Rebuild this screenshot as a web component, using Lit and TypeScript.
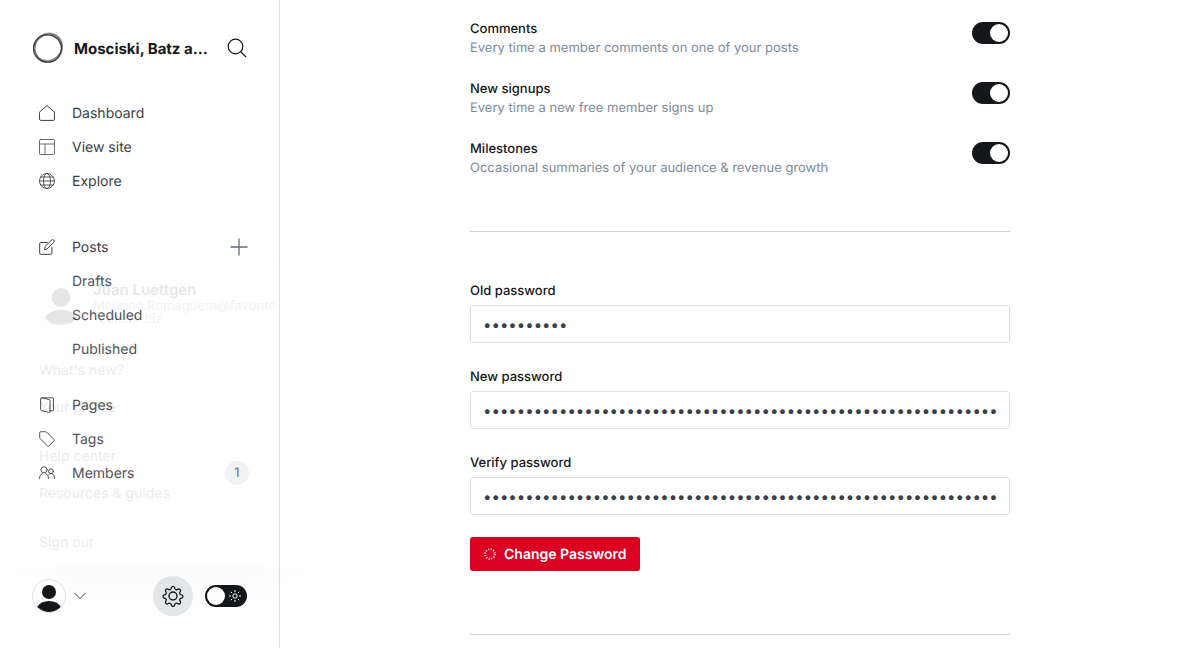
import { LitElement, html, svg, css, nothing } from "lit";
import { customElement, property, state } from "lit/decorators.js";

const icons: Record<string, unknown> = {
  home: svg`<path d="M.6 7 8 .6 15.400 7v7.400a1 1 0 0 1-1 1H1.600a1 1 0 0 1-1-1z"/>`,
  site: svg`<g stroke-opacity=".75"><rect x=".5" y=".5" width="15" height="15" rx="1"/><path d="M.5 5h15M6 5v10.500"/></g>`,
  globe: svg`<g stroke-opacity=".85"><circle cx="8" cy="8" r="7.500"/><ellipse cx="8" cy="8" rx="3.500" ry="7.500"/><path d="M.5 8h15M1.700 4h12.600M1.700 12h12.600"/></g>`,
  posts: svg`<path d="M8.300 3.500H1.700a1 1 0 0 0-1 1v9.800a1 1 0 0 0 1 1h10.200a1 1 0 0 0 1-1V8.300"/><path d="m5.700 10.300.6-3L12.500 1a1.450 1.450 0 0 1 2.200 0 1.450 1.450 0 0 1 0 2.200L8.500 9.600z"/>`,
  pages: svg`<path d="M11 13.700h2.500a.9.9 0 0 0 .9-.9V1.700a.9.9 0 0 0-.9-.9H2.400"/><path d="M1.600 1.700a.9.9 0 0 1 1.100-.9l7.500 1.700a1 1 0 0 1 .8 1v11a.9.9 0 0 1-1.100.9l-7.600-1.900a1 1 0 0 1-.7-.9z"/>`,
  tags: svg`<path d="M.7 1.700a1 1 0 0 1 1-1h4.900a1.500 1.500 0 0 1 1 .4l7.400 7.400a1 1 0 0 1 0 1.400l-5.100 5.100a1 1 0 0 1-1.400 0L1.100 7.600a1.500 1.500 0 0 1-.4-1z"/>`,
  members: svg`<circle cx="5" cy="4.800" r="3.100"/><path d="M.5 13.500c0-2.600 1.200-4.300 2.800-5M9.500 13.500c0-2.600-1.200-4.300-2.800-5"/><circle cx="12" cy="6.300" r="2.400"/><path d="M9.700 9.700l1-.9M13.300 8.700c1.300.6 2.200 2.300 2.200 4.800"/>`,
};

interface NavItem {
  label: string;
  icon?: string;
  add?: boolean;
  count?: number;
}

const navGroups: NavItem[][] = [
  [
    { label: "Dashboard", icon: "home" },
    { label: "View site", icon: "site" },
    { label: "Explore", icon: "globe" },
  ],
  [
    { label: "Posts", icon: "posts", add: true },
    { label: "Drafts" },
    { label: "Scheduled" },
    { label: "Published" },
  ],
  [
    { label: "Pages", icon: "pages" },
    { label: "Tags", icon: "tags" },
    { label: "Members", icon: "members", count: 1 },
  ],
];

const notifications = [
  { id: "comments", title: "Comments", text: "Every time a member comments on one of your posts" },
  { id: "signups", title: "New signups", text: "Every time a new free member signs up" },
  { id: "milestones", title: "Milestones", text: "Occasional summaries of your audience & revenue growth" },
];

const passwords = [
  { id: "old-password", label: "Old password", length: 10 },
  { id: "new-password", label: "New password", length: 64 },
  { id: "verify-password", label: "Verify password", length: 64 },
];

const menuGroups = [
  ["What's new?", "Your profile"],
  ["Help center", "Resources & guides"],
  ["Sign out"],
];

const reset = css`
  *,
  *::before,
  *::after {
    box-sizing: border-box;
  }
  button,
  input {
    margin: 0;
    padding: 0;
    border: 0;
    background: none;
    font: inherit;
    color: inherit;
    text-rendering: inherit;
  }
  button {
    cursor: pointer;
  }
  a {
    color: inherit;
    text-decoration: none;
  }
  svg {
    display: block;
    fill: none;
    stroke: currentColor;
  }
`;

const person = svg`<circle cx="17" cy="13" r="7"/><path d="M5 28c2.500-4 6.500-6 12-6s9.500 2 12 6c-2.500 3.500-7 5-12 5s-9.500-1.500-12-5z"/>`;

@customElement("account-menu")
class AccountMenu extends LitElement {
  static styles = [
    reset,
    css`
      :host {
        display: block;
        background: #fff;
        border-radius: 4px;
        box-shadow: 0 0 7px rgba(0, 0, 0, 0.08), 0 46px 40px -24px rgba(0, 0, 0, 0.12);
        color: #394047;
        font-size: 14px;
      }
      .profile {
        display: flex;
        gap: 10px;
        padding: 18px 24px 20px;
      }
      .avatar {
        flex: none;
        width: 44px;
        height: 46px;
        color: #15171a;
        fill: currentColor;
        stroke: none;
      }
      .name {
        font-size: 15px;
        font-weight: 600;
        line-height: 20px;
        color: #15171a;
      }
      .email {
        width: 188px;
        font-size: 13px;
        line-height: 13px;
        color: #7c8b9a;
        word-break: break-all;
      }
      .group {
        border-top: 1px solid #e1e5e8;
        padding: 5px 0 6px;
      }
      .item {
        display: block;
        padding: 0 24px;
        line-height: 37px;
      }
    `,
  ];

  render() {
    return html`
      <div class="profile">
        <svg class="avatar" viewBox="2 0 30 34">${person}</svg>
        <div>
          <div class="name">Juan Luettgen</div>
          <div class="email">Maurine.Romaguera@favorite-catsup.biz</div>
        </div>
      </div>
      ${menuGroups.map(
        (group) => html`<div class="group">
          ${group.map((label) => html`<a class="item" href="#">${label}</a>`)}
        </div>`
      )}
    `;
  }
}

@customElement("side-bar")
class SideBar extends LitElement {
  static styles = [
    reset,
    css`
      :host {
        position: relative;
        display: flex;
        flex-direction: column;
        flex: none;
        width: 280px;
        padding: 28px 32px 32px;
        border-right: 1px solid #dddfe2;
        color: #394047;
        font-size: 14px;
      }
      .header {
        display: flex;
        align-items: center;
        height: 40px;
        margin-bottom: 28px;
        color: #15171a;
      }
      .logo {
        flex: none;
        width: 32px;
        height: 32px;
        margin-right: 10px;
        color: #3d3d3d;
      }
      .title {
        width: 138px;
        overflow: hidden;
        white-space: nowrap;
        text-overflow: ellipsis;
        font-size: 15px;
        font-weight: 700;
      }
      .search {
        margin-left: auto;
      }
      .nav {
        display: flex;
        flex-direction: column;
        flex: 1;
      }
      .group {
        margin: 0 0 32px;
        padding: 0;
        list-style: none;
      }
      .group + .group {
        margin-bottom: 22px;
      }
      .row {
        display: flex;
        align-items: center;
        justify-content: space-between;
        height: 34px;
      }
      .link {
        display: flex;
        align-items: center;
        gap: 16px;
        padding-left: 6px;
      }
      .glyph {
        width: 18px;
        height: 18px;
        display: grid;
        place-items: center;
      }
      .add {
        margin-right: -1px;
        color: #626d79;
      }
      .count {
        width: 24px;
        height: 24px;
        margin-right: -2px;
        border-radius: 12px;
        background: #eff1f3;
        color: #54606c;
        font-size: 13px;
        line-height: 24px;
        text-align: center;
      }
      .footer {
        display: flex;
        align-items: center;
        height: 40px;
      }
      .user {
        display: flex;
        align-items: center;
        gap: 8px;
        margin-right: auto;
      }
      .avatar {
        width: 34px;
        height: 34px;
        border: 1px solid #e1e5e8;
        border-radius: 50%;
        background: #fff;
        color: #15171a;
        overflow: hidden;
      }
      .avatar svg {
        fill: currentColor;
        stroke: none;
      }
      .settings {
        display: grid;
        place-items: center;
        width: 40px;
        height: 40px;
        margin-right: 12px;
        border-radius: 50%;
        background: #e4e8eb;
        color: #15171a;
      }
      .theme {
        display: flex;
        align-items: center;
        justify-content: space-between;
        width: 42px;
        height: 22px;
        padding: 0 6px 0 2px;
        border-radius: 11px;
        background: #15171a;
        color: #fff;
      }
      .knob {
        width: 18px;
        height: 18px;
        border-radius: 50%;
        background: #fff;
      }
      .menu {
        position: absolute;
        left: 15px;
        bottom: 81px;
        width: 290px;
        opacity: 0.1;
        z-index: 1;
      }
    `,
  ];

  private row(item: NavItem) {
    return html`<li class="row">
      <a class="link" href="#">
        <span class="glyph">
          ${item.icon
            ? html`<svg width="16" height="16" viewBox="0 0 16 16" stroke-linejoin="round" stroke-linecap="round">${icons[item.icon]}</svg>`
            : nothing}
        </span>
        <span>${item.label}</span>
      </a>
      ${item.add
        ? html`<button class="add" aria-label="New post">
            <svg width="18" height="18" viewBox="0 0 18 18" stroke-width="1.300"><path d="M9 .5v17M.5 9h17" /></svg>
          </button>`
        : nothing}
      ${item.count ? html`<span class="count">${item.count}</span>` : nothing}
    </li>`;
  }

  render() {
    return html`
      <div class="header">
        <svg class="logo" viewBox="0 0 32 32">
          <ellipse cx="15.500" cy="16.500" rx="13.900" ry="13.700" stroke-width="1.300" />
          <ellipse cx="16.600" cy="15.700" rx="13.400" ry="14.200" stroke-width="1.200" opacity=".5" transform="rotate(30 16 16)" />
          <ellipse cx="16.800" cy="15.400" rx="14.400" ry="13.200" stroke-width="1.600" opacity=".4" transform="rotate(-42 16 16)" />
          <ellipse cx="15.400" cy="16" rx="13.200" ry="14.400" stroke-width="1.200" opacity=".4" transform="rotate(60 16 16)" />
        </svg>
        <div class="title">Mosciski, Batz and Sons</div>
        <button class="search" aria-label="Search">
          <svg width="20" height="20" viewBox="0 0 20 20" stroke-width="1.200"><circle cx="8.500" cy="8.500" r="7.300" /><path d="m13.600 13.600 5.400 5.400" /></svg>
        </button>
      </div>
      <nav class="nav">
        ${navGroups.map((group) => html`<ul class="group">${group.map((item) => this.row(item))}</ul>`)}
      </nav>
      <div class="footer">
        <button class="user" aria-label="Account">
          <span class="avatar"><svg width="32" height="32" viewBox="1 1 32 32">${person}</svg></span>
          <svg width="12" height="8" viewBox="0 0 12 8"><path d="m.5 1 5.500 5.500L11.500 1" /></svg>
        </button>
        <button class="settings" aria-label="Settings">
          <svg width="22" height="22" viewBox="0 0 22 22" stroke-width="1.400" stroke-linejoin="round">
            <circle cx="11" cy="11" r="4" />
            <path d="M9.300 2.600a1.800 1.800 0 0 1 3.400 0l.4 1.200a1.800 1.800 0 0 0 2.500 1l1.100-.5a1.800 1.800 0 0 1 2.400 2.400l-.6 1.100a1.800 1.800 0 0 0 1 2.500l1.200.4a1.800 1.800 0 0 1 0 3.400l-1.200.4a1.800 1.800 0 0 0-1 2.500l.6 1.100a1.800 1.800 0 0 1-2.400 2.400l-1.100-.6a1.800 1.800 0 0 0-2.500 1l-.4 1.200a1.800 1.800 0 0 1-3.400 0l-.4-1.200a1.800 1.800 0 0 0-2.500-1l-1.100.6a1.800 1.800 0 0 1-2.400-2.400l.5-1.100a1.800 1.800 0 0 0-1-2.500l-1.200-.4a1.800 1.800 0 0 1 0-3.400l1.200-.4a1.800 1.800 0 0 0 1-2.500l-.5-1.100a1.800 1.800 0 0 1 2.400-2.400l1.100.5a1.800 1.800 0 0 0 2.500-1z" transform="translate(1 .2) scale(.91)" />
          </svg>
        </button>
        <button class="theme" aria-label="Night shift">
          <span class="knob"></span>
          <svg width="12" height="12" viewBox="0 0 12 12"><circle cx="6" cy="6" r="2.200" /><path d="M6 0v2M6 10v2M0 6h2M10 6h2M1.800 1.800l1.300 1.300M8.900 8.900l1.300 1.300M1.800 10.200l1.300-1.300M8.900 3.100l1.300-1.300" /></svg>
        </button>
      </div>
      <account-menu class="menu"></account-menu>
    `;
  }
}

@customElement("toggle-switch")
class ToggleSwitch extends LitElement {
  @property() label = "";
  @property({ type: Boolean }) checked = false;

  static styles = [
    reset,
    css`
      :host {
        display: block;
        height: 22px;
      }
      .switch {
        appearance: none;
        display: block;
        width: 38px;
        height: 22px;
        padding: 2px;
        border-radius: 11px;
        background: #dde1e5;
        cursor: pointer;
      }
      .switch::before {
        content: "";
        display: block;
        width: 18px;
        height: 18px;
        border-radius: 50%;
        background: #fff;
      }
      .switch:checked {
        background: #15171a;
      }
      .switch:checked::before {
        margin-left: auto;
      }
    `,
  ];

  render() {
    return html`<input class="switch" type="checkbox" role="switch" aria-label=${this.label} .checked=${this.checked} />`;
  }
}

@customElement("app-root")
class AppRoot extends LitElement {
  @state() private saving = true;

  static styles = [
    reset,
    css`
      :host {
        display: flex;
        height: 100vh;
        overflow: hidden;
        background: #fff;
        color: #15171a;
        font-family: Inter, "Liberation Sans", sans-serif;
        font-size: 13px;
        text-rendering: geometricPrecision;
      }
      .main {
        flex: 1;
        min-width: 0;
        overflow: hidden;
        padding: 18px 24px 0;
      }
      .column {
        max-width: 540px;
        margin: 0 auto;
      }
      .notice {
        display: flex;
        justify-content: space-between;
        height: 60px;
        padding-top: 1px;
      }
      .title {
        font-weight: 500;
        line-height: 20px;
      }
      .text {
        color: #7c8b9a;
        line-height: 18px;
      }
      .toggle {
        margin-top: 3px;
      }
      .form {
        margin-top: 33px;
        padding: 47px 0 63px;
        border-top: 1px solid #ced4d9;
        border-bottom: 1px solid #ced4d9;
      }
      .field {
        margin-bottom: 22px;
      }
      .label {
        display: block;
        margin-bottom: 2px;
        font-weight: 500;
        line-height: 24px;
      }
      .input {
        display: block;
        width: 100%;
        height: 38px;
        padding: 0 12px;
        border: 1px solid #dddfe2;
        border-radius: 3px;
        background: #fff;
        color: #394047;
        font-size: 15px;
      }
      .submit {
        display: flex;
        align-items: center;
        gap: 8px;
        height: 34px;
        padding: 0 14px;
        border-radius: 3px;
        background: #d90022;
        color: #fff;
        font-size: 14px;
        font-weight: 600;
      }
      .spinner {
        opacity: 0.75;
      }
    `,
  ];

  render() {
    return html`
      <side-bar></side-bar>
      <main class="main">
        <div class="column">
          ${notifications.map(
            (n) => html`<div class="notice">
              <div>
                <div class="title">${n.title}</div>
                <div class="text">${n.text}</div>
              </div>
              <toggle-switch class="toggle" label=${n.title} checked></toggle-switch>
            </div>`
          )}
          <form class="form" @submit=${(e: Event) => e.preventDefault()}>
            ${passwords.map(
              (p) => html`<div class="field">
                <label class="label" for=${p.id}>${p.label}</label>
                <input class="input" id=${p.id} type="password" .value=${"x".repeat(p.length)} />
              </div>`
            )}
            <button class="submit">
              ${this.saving
                ? html`<svg class="spinner" width="12" height="12" viewBox="0 0 12 12"><circle cx="6" cy="6" r="4.800" stroke-width="2.200" stroke-dasharray="1.200 1.313" /></svg>`
                : nothing}
              Change Password
            </button>
          </form>
        </div>
      </main>
    `;
  }
}
